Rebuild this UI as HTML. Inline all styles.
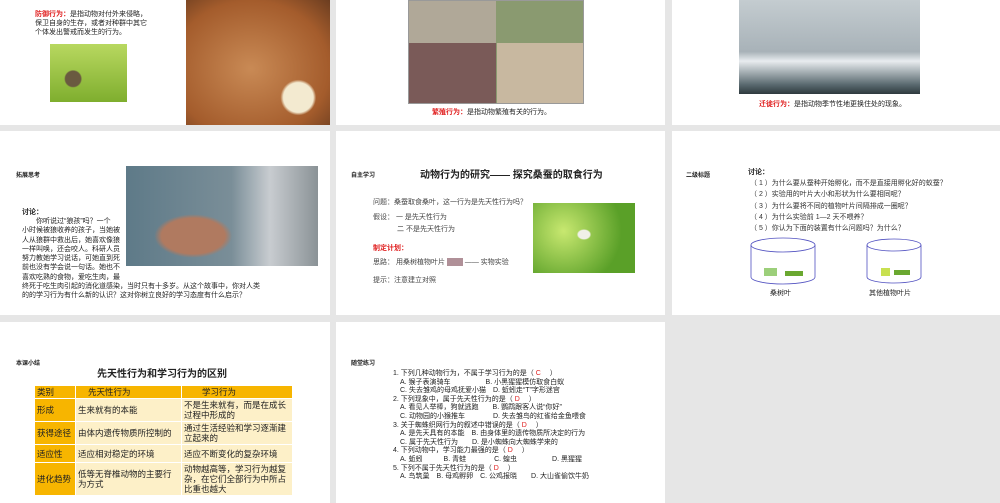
<!DOCTYPE html>
<html><head><meta charset="utf-8"><style>
*{margin:0;padding:0;box-sizing:border-box}
body{width:1000px;height:503px;background:#e6e6e6;position:relative;overflow:hidden;font-family:"Liberation Sans","Noto Sans CJK SC",sans-serif;color:#222}
.s{position:absolute;background:#fff;overflow:hidden}
.a{position:absolute;white-space:nowrap}
.t7{font-size:7px;line-height:9px}
.r{color:#e02020;font-weight:bold}
.b{font-weight:bold}
table{border-collapse:collapse;position:absolute;left:34px;top:385px;width:259px;font-size:8.5px;line-height:10px}
td{border:1px solid #fff;padding:1px 2px;vertical-align:middle;background:#fdf0c8}
td.g{background:#f7b500}
</style></head><body>
<!-- row1 -->
<div class="s" style="left:0;top:0;width:330px;height:125px">
 <div class="a t7" style="left:35px;top:10px"><span class="r">防御行为：</span>是指动物对付外来侵略，<br>保卫自身的生存，或者对种群中其它<br>个体发出警戒而发生的行为。</div>
 <div class="a" style="left:50px;top:44px;width:77px;height:58px;background:radial-gradient(circle at 30% 60%,#6a5a40 0 12%,transparent 14%),linear-gradient(#b8d860,#7fae2e)"></div>
 <div class="a" style="left:186px;top:0;width:144px;height:125px;background:radial-gradient(circle at 78% 78%,#f3ead0 0 10%,transparent 12%),radial-gradient(ellipse at 45% 55%,#c98a55,#a45c2c 70%,#6b3d20)"></div>
</div>
<div class="s" style="left:336px;top:0;width:329px;height:125px">
 <div class="a" style="left:72px;top:0;width:176px;height:104px;background:linear-gradient(90deg,#b0a898 0 50%,#8a9a70 50%);border:1px solid #999"></div>
 <div class="a" style="left:73px;top:43px;width:87px;height:60px;background:#7a5a58"></div>
 <div class="a" style="left:161px;top:43px;width:86px;height:60px;background:#c8b8a0"></div>
 <div class="a t7" style="left:96px;top:108px"><span class="r">繁殖行为：</span>是指动物繁殖有关的行为。</div>
</div>
<div class="s" style="left:672px;top:0;width:328px;height:125px">
 <div class="a" style="left:67px;top:0;width:181px;height:94px;background:linear-gradient(#c4ccd0,#a8b2b8 55%,#e8ecef 65%,#5a6a70 90%,#2e3a3e)"></div>
 <div class="a t7" style="left:87px;top:100px"><span class="r">迁徙行为：</span>是指动物季节性地更换住处的现象。</div>
</div>
<!-- row2 -->
<div class="s" style="left:0;top:131px;width:330px;height:184px">
 <div class="a b" style="left:16px;top:39px;font-size:6px">拓展思考</div>
 <div class="a" style="left:126px;top:35px;width:192px;height:100px;background:radial-gradient(ellipse at 35% 70%,#b07a60 0 18%,transparent 22%),linear-gradient(90deg,#5e7a88,#7a8e98 55%,#c8ccd0 75%,#8a9296)"></div>
 <div class="a t7 b" style="left:22px;top:77px">讨论：</div>
 <div class="a t7" style="left:22px;top:86px;line-height:9.3px">　　你听说过“狼孩”吗？一个<br>小时候被狼收养的孩子，当她被<br>人从狼群中救出后，她喜欢像狼<br>一样叫唤，还会咬人。科研人员<br>努力教她学习说话，可她直到死<br>前也没有学会说一句话。她也不<br>喜欢吃熟的食物，爱吃生肉，最<br>终死于吃生肉引起的消化道感染，当时只有十多岁。从这个故事中，你对人类<br>的的学习行为有什么新的认识？这对你树立良好的学习态度有什么启示？</div>
</div>
<div class="s" style="left:336px;top:131px;width:329px;height:184px">
 <div class="a b" style="left:15px;top:39px;font-size:6px">自主学习</div>
 <div class="a b" style="left:84px;top:35px;font-size:10px">动物行为的研究——  探究桑蚕的取食行为</div>
 <div class="a t7" style="left:37px;top:67px;color:#444">问题：桑蚕取食桑叶，这一行为是先天性行为吗？</div>
 <div class="a t7" style="left:37px;top:82px;color:#444">假设：  一   是先天性行为</div>
 <div class="a t7" style="left:61px;top:94px;color:#444">二  不是先天性行为</div>
 <div class="a t7 r" style="left:37px;top:113px">制定计划：</div>
 <div class="a t7" style="left:37px;top:127px;color:#444">思路：    用桑树植物叶片 <span style="display:inline-block;width:16px;height:8px;background:#b09098;vertical-align:middle"></span>  —— 实物实验</div>
 <div class="a t7" style="left:37px;top:145px;color:#444">提示：注意建立对照</div>
 <div class="a" style="left:197px;top:72px;width:102px;height:70px;background:radial-gradient(ellipse at 50% 45%,#f0f0e8 0 8%,transparent 10%),radial-gradient(circle at 30% 40%,#c8e870,#5aa028 70%)"></div>
</div>
<div class="s" style="left:672px;top:131px;width:328px;height:184px">
 <div class="a b" style="left:14px;top:39px;font-size:6px">二级标题</div>
 <div class="a t7 b" style="left:76px;top:37px">讨论：</div>
 <div class="a t7" style="left:78px;top:47px;line-height:11.3px;color:#333">（ 1 ）为什么要从蚕种开始孵化，而不是直接用孵化好的蚁蚕？<br>（ 2 ）实验用的叶片大小和形状为什么要相同呢？<br>（ 3 ）为什么要将不同的植物叶片间隔排成一圈呢？<br>（ 4 ）为什么实验前 1—2 天不喂养？<br>（ 5 ）你认为下面的装置有什么问题吗？为什么？</div>
 <svg class="a" style="left:70px;top:104px" width="180" height="55">
  <g fill="none" stroke="#5050c0" stroke-width="0.8">
   <ellipse cx="41" cy="10" rx="32" ry="7"/><path d="M9 10V42M73 10V42M9 42A32 7 0 0 0 73 42"/>
   <ellipse cx="152" cy="10" rx="27" ry="6"/><path d="M125 10V42M179 10V42M125 42A27 6 0 0 0 179 42"/>
  </g>
  <rect x="22" y="33" width="13" height="8" fill="#9ccf7a"/><rect x="43" y="36" width="18" height="5" fill="#6aa830"/>
  <rect x="139" y="33" width="9" height="8" fill="#c8e050"/><rect x="152" y="35" width="16" height="5" fill="#6aa830"/>
 </svg>
 <div class="a t7" style="left:98px;top:158px">桑树叶</div>
 <div class="a t7" style="left:197px;top:158px">其他植物叶片</div>
</div>
<!-- row3 -->
<div class="s" style="left:0;top:322px;width:330px;height:181px">
 <div class="a b" style="left:16px;top:36px;font-size:6px">本课小结</div>
 <div class="a b" style="left:97px;top:43px;font-size:10px">先天性行为和学习行为的区别</div>
</div>
<table>
<tr style="height:13px"><td class="g" style="width:41px">类别</td><td class="g" style="width:106px;padding-left:12px">先天性行为</td><td class="g" style="padding-left:20px">学习行为</td></tr>
<tr style="height:22px"><td class="g">形成</td><td>生来就有的本能</td><td>不是生来就有，而是在成长过程中形成的</td></tr>
<tr style="height:23px"><td class="g">获得途径</td><td>由体内遗传物质所控制的</td><td>通过生活经验和学习逐渐建立起来的</td></tr>
<tr style="height:18px"><td class="g">适应性</td><td>适应相对稳定的环境</td><td>适应不断变化的复杂环境</td></tr>
<tr style="height:32px"><td class="g">进化趋势</td><td>低等无脊椎动物的主要行为方式</td><td>动物越高等，学习行为越复杂，在它们全部行为中所占比重也越大</td></tr>
</table>
<div class="s" style="left:336px;top:322px;width:329px;height:181px">
 <div class="a b" style="left:15px;top:36px;font-size:6px">随堂练习</div>
 <div class="a" style="left:57px;top:48px;font-size:7px;line-height:8.6px;color:#222">1. 下列几种动物行为，不属于学习行为的是（ <span style="color:#e02020">C</span> 　）<br>　A. 猴子表演骑车　　　　　B. 小黑猩猩模仿取食白蚁<br>　C. 失去雏鸡的母鸡抚爱小猫　D. 蚯蚓走“T”字形迷宫<br>2. 下列现象中，属于先天性行为的是（ <span style="color:#e02020">D</span> 　）<br>　A. 看见人举棒，狗就逃跑　　B. 鹦鹉跟客人说“你好”<br>　C. 动物园的小猴推车　　　　D. 失去雏鸟的红雀给金鱼喂食<br>3. 关于蜘蛛织网行为的叙述中错误的是（ <span style="color:#e02020">D</span> 　）<br>　A. 是先天具有的本能　B. 由身体里的遗传物质所决定的行为<br>　C. 属于先天性行为　　D. 是小蜘蛛向大蜘蛛学来的<br>4. 下列动物中，学习能力最强的是（ <span style="color:#e02020">D</span> 　）<br>　A. 蚯蚓　　　B. 青蛙　　　　C. 蝗虫　　　　　D. 黑猩猩<br>5. 下列不属于先天性行为的是（ <span style="color:#e02020">D</span> 　）<br>　A. 鸟筑巢　B. 母鸡孵卵　C. 公鸡报晓　　D. 大山雀偷饮牛奶</div>
</div>
</body></html>
